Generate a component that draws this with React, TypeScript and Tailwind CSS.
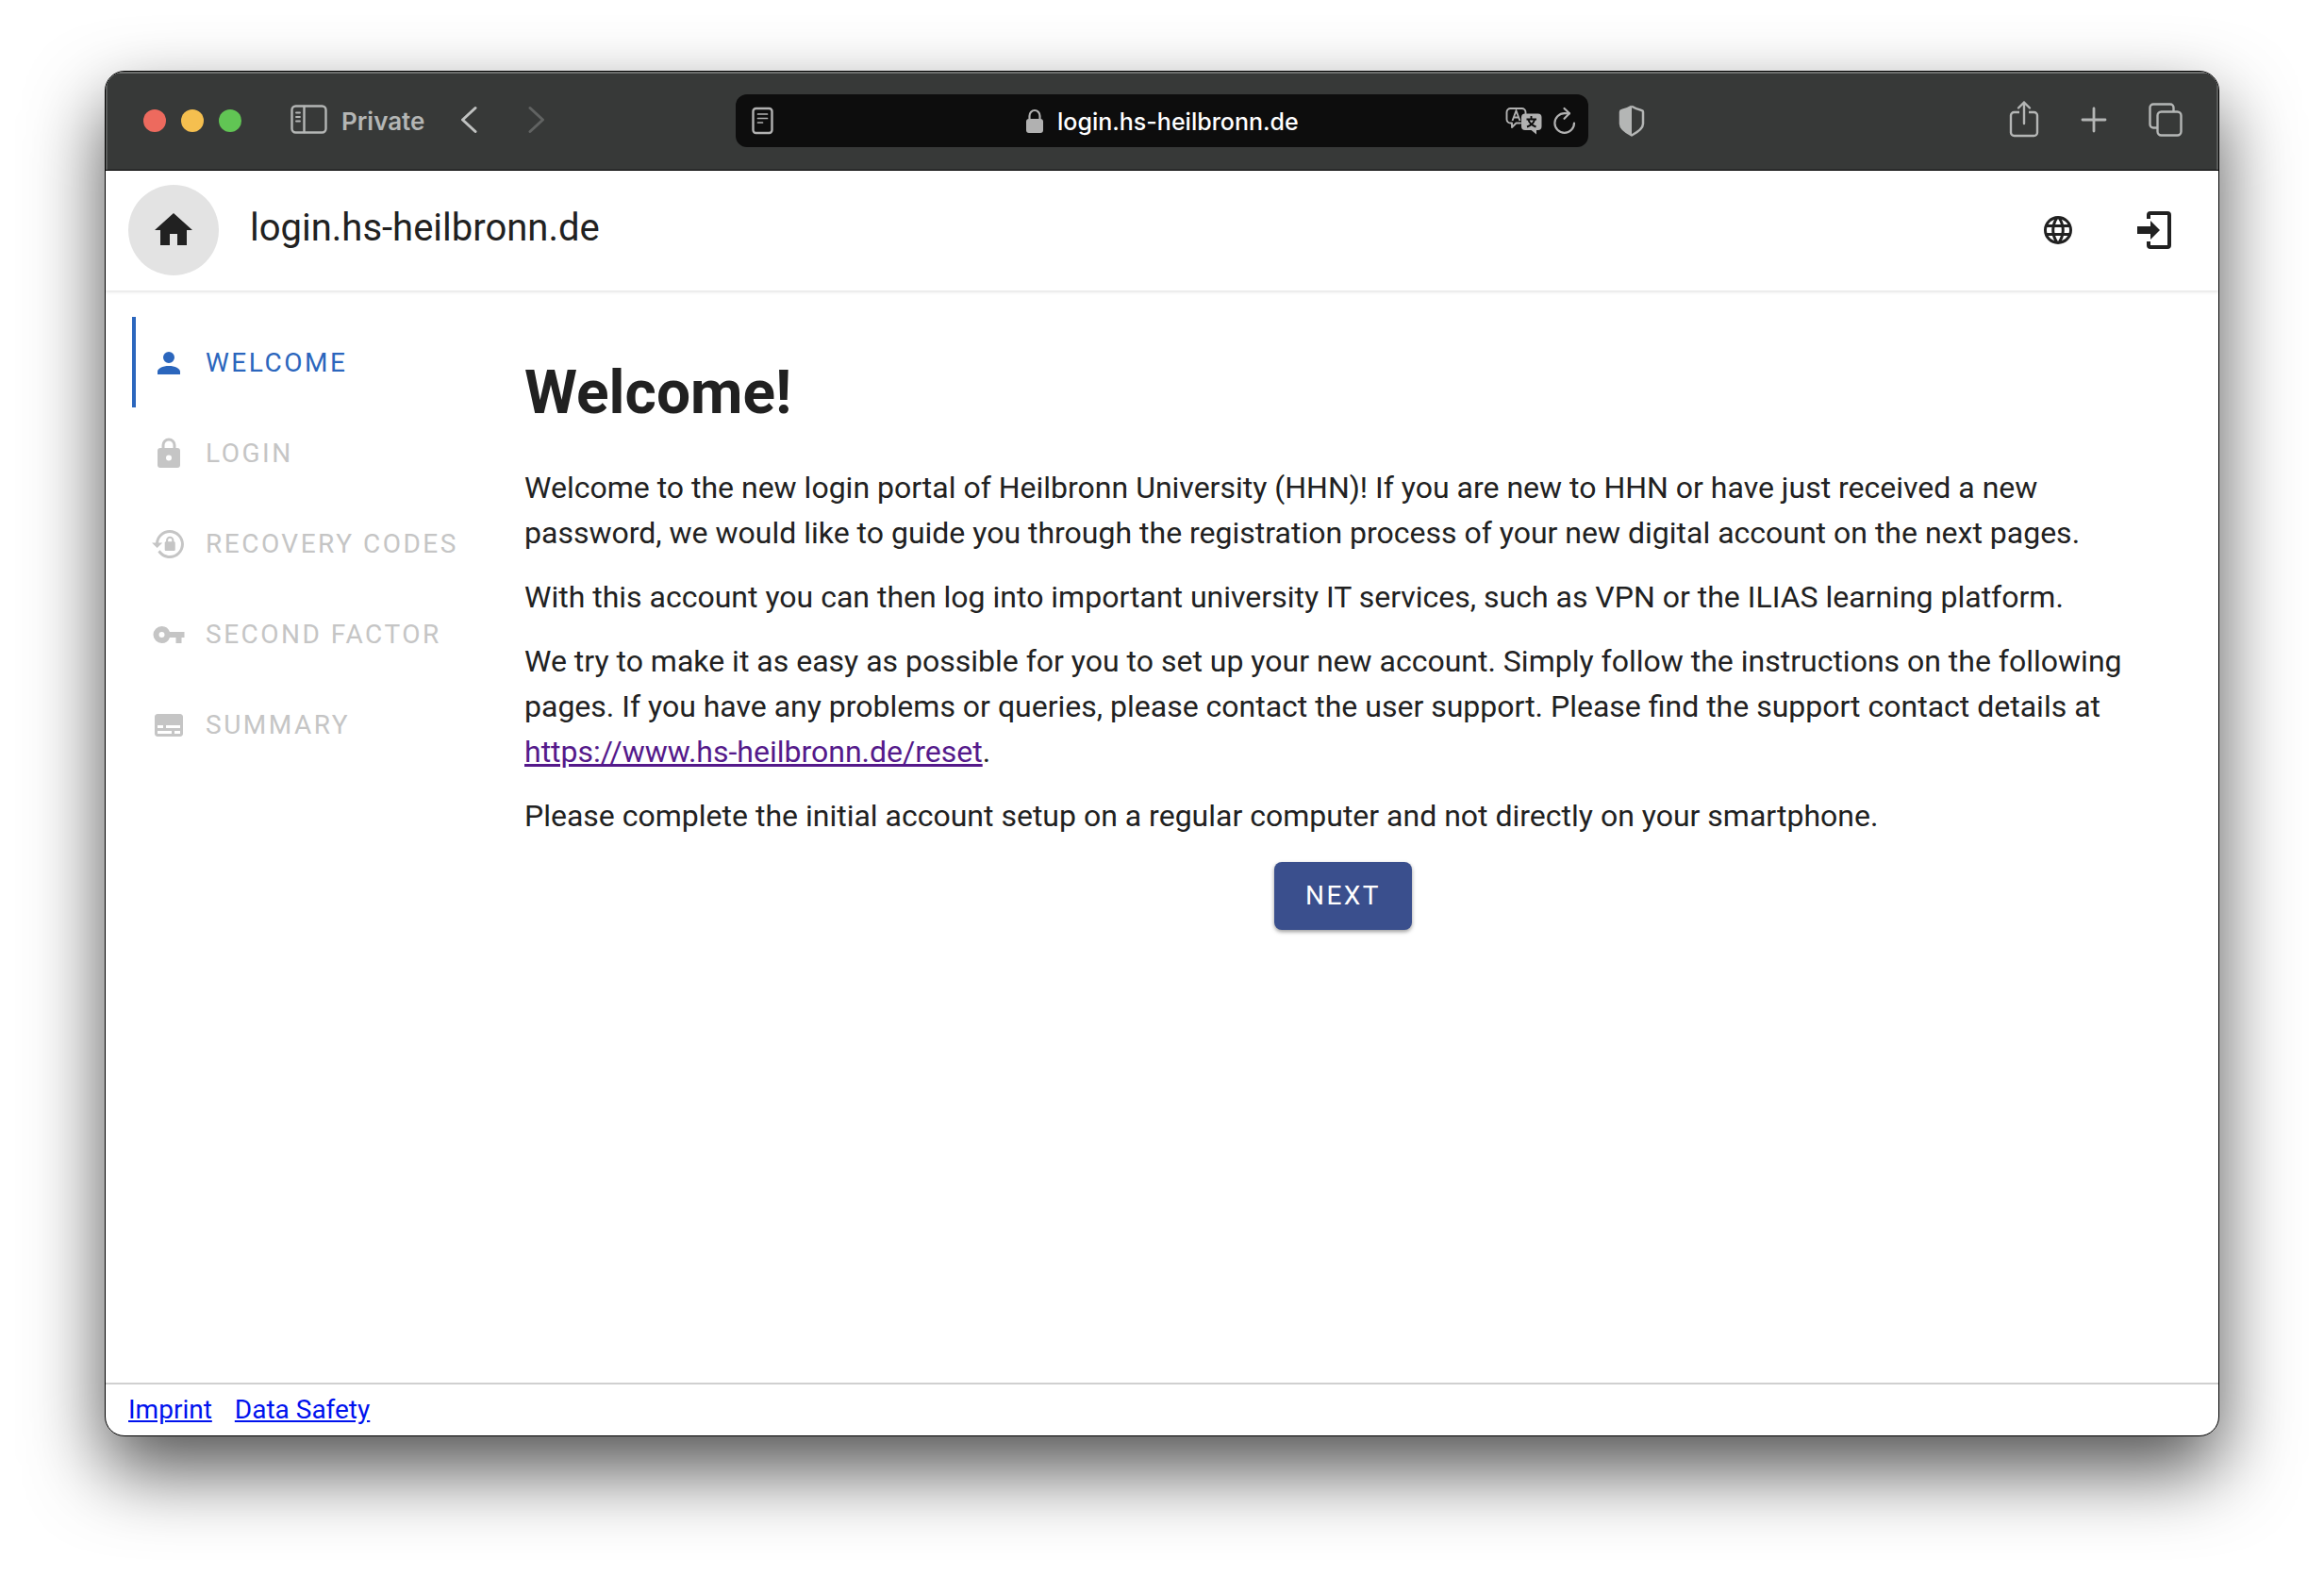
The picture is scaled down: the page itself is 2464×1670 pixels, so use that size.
import React from "react";

const navItems = [
  { label: "Welcome", path: "M12 4a4 4 0 0 1 4 4a4 4 0 0 1-4 4a4 4 0 0 1-4-4a4 4 0 0 1 4-4m0 10c4.420 0 8 1.790 8 4v2H4v-2c0-2.210 3.580-4 8-4" },
  { label: "Login", path: "M12 17a2 2 0 0 0 2-2a2 2 0 0 0-2-2a2 2 0 0 0-2 2a2 2 0 0 0 2 2m6-9a2 2 0 0 1 2 2v10a2 2 0 0 1-2 2H6a2 2 0 0 1-2-2V10a2 2 0 0 1 2-2h1V6a5 5 0 0 1 5-5a5 5 0 0 1 5 5v2zm-6-5a3 3 0 0 0-3 3v2h6V6a3 3 0 0 0-3-3" },
  { label: "Recovery codes", path: "M12.630 2c5.530 0 10.010 4.500 10.010 10s-4.480 10-10.010 10c-3.510 0-6.580-1.820-8.370-4.570l1.580-1.250C7.250 18.470 9.760 20 12.640 20a8 8 0 0 0 8-8a8 8 0 0 0-8-8C8.560 4 5.200 7.060 4.710 11h2.760l-3.740 3.730L0 11h2.690c.5-5.050 4.760-9 9.940-9m2.960 8.240c.5.010.91.410.91.920v4.610c0 .5-.41.920-.92.920H10.050c-.51 0-.92-.42-.92-.92v-4.610c0-.510.41-.910.91-.920V9.230c0-1.530 1.250-2.770 2.770-2.770c1.530 0 2.780 1.240 2.780 2.770zM12.810 7.860c-.75 0-1.370.61-1.370 1.370v1.010h2.750V9.230c0-.760-.62-1.370-1.380-1.370" },
  { label: "Second factor", path: "M7 14a2 2 0 0 1-2-2a2 2 0 0 1 2-2a2 2 0 0 1 2 2a2 2 0 0 1-2 2m5.650-4A5.990 5.990 0 0 0 7 6a6 6 0 0 0-6 6a6 6 0 0 0 6 6a5.990 5.990 0 0 0 5.650-4H17v4h4v-4h2v-4z" },
  { label: "Summary", path: "M20 4H4c-1.100 0-2 .9-2 2v12c0 1.100.9 2 2 2h16c1.100 0 2-.9 2-2V6c0-1.100-.9-2-2-2M4 12h4v2H4zm10 6H4v-2h10zm6 0h-4v-2h4zm0-4H10v-2h10z" },
];

function Glyph({ d, className }: { d: string; className: string }) {
  return (
    <svg viewBox="0 0 24 24" fill="currentColor" fillRule="evenodd" aria-hidden="true" className={className}>
      <path d={d} />
    </svg>
  );
}

const line = {
  fill: "none",
  stroke: "currentColor",
  strokeWidth: 2.4,
  strokeLinecap: "round" as const,
  strokeLinejoin: "round" as const,
  "aria-hidden": true,
};

function BrowserBar() {
  return (
    <div className="grid h-[105px] shrink-0 grid-cols-[1fr_904px_1fr] items-center border-b border-black bg-[#373938] text-[#b4b6b5] shadow-[inset_0_2px_0_#6d6f6e,inset_2px_0_0_#5a5c5b,inset_-2px_0_0_#5a5c5b]">
      <div className="flex items-center pl-10">
        <div className="flex gap-4">
          <button aria-label="Close window" className="size-6 rounded-full bg-[#ed6a5e]" />
          <button aria-label="Minimize window" className="size-6 rounded-full bg-[#f5bf4f]" />
          <button aria-label="Zoom window" className="size-6 rounded-full bg-[#61c554]" />
        </div>
        <button className="ml-13 flex items-center gap-[14px] pt-[2px] text-[26px] leading-8 font-semibold font-[Inter,sans-serif]">
          <svg viewBox="0 0 40 32" className="-mt-1 h-8 w-10" {...line}>
            <rect x="1.500" y="1.500" width="36" height="28" rx="4" />
            <path d="M14.500 2v27" />
            <path d="M6 8.500h4M6 13h4M6 17.500h4" strokeWidth="1.800" />
          </svg>
          Private
        </button>
        <button aria-label="Back" className="ml-[38px] text-[#c0c2c1]">
          <svg viewBox="0 0 18 32" className="-mt-[2px] h-8 w-[18px]" {...line} strokeWidth="3">
            <path d="M16 3.500 2.500 16 16 28.500" />
          </svg>
        </button>
        <button aria-label="Forward" className="ml-[54px] text-[#616362]">
          <svg viewBox="0 0 18 32" className="-mt-[2px] h-8 w-[18px]" {...line} strokeWidth="3">
            <path d="M2 3.500 15.500 16 2 28.500" />
          </svg>
        </button>
      </div>

      <div className="flex h-14 items-center justify-between rounded-xl bg-[#0d0d0d] pr-[13px] pl-[17px] text-[#b1b1b1]">
        <button aria-label="Show reader" className="flex w-20">
          <svg viewBox="0 0 24 30" className="h-[30px] w-6" {...line}>
            <rect x="1.500" y="2" width="20" height="26" rx="3" />
            <path d="M6.500 8h10M6.500 12.500h10M6.500 17h5" strokeWidth="1.700" />
          </svg>
        </button>
        <label className="flex items-center gap-[14px] pt-[2px]">
          <svg viewBox="0 0 20 28" className="h-7 w-5" aria-hidden="true">
            <rect x="1" y="11" width="18" height="15" rx="3" fill="currentColor" />
            <path d="M4.500 12V8a5.500 6 0 0 1 11 0v4" fill="none" stroke="currentColor" strokeWidth="2.200" />
          </svg>
          <input
            aria-label="Address"
            readOnly
            value="login.hs-heilbronn.de"
            className="w-[260px] bg-transparent text-[25px] leading-8 font-medium text-white outline-none font-[Inter,sans-serif]"
          />
        </label>
        <div className="flex w-20 items-center justify-end gap-3">
          <button aria-label="Translate">
            <svg viewBox="0 0 39 30" className="h-[30px] w-[39px]" aria-hidden="true">
              <path d="M16 17.500h-4.500l-4.500 4.500v-4.500H5.500a4 4 0 0 1-4-4V6a4 4 0 0 1 4-4h12a4 4 0 0 1 4 4v1.500" fill="none" stroke="currentColor" strokeWidth="1.900" strokeLinecap="round" strokeLinejoin="round" />
              <path d="m7.500 15 4-10.500L15.500 15M8.800 11.500h5.400" fill="none" stroke="currentColor" strokeWidth="1.900" />
              <path d="M21 7.500h13.500a4 4 0 0 1 4 4V21a4 4 0 0 1-4 4H33v4.500L27.500 25H21a4 4 0 0 1-4-4v-9.500a4 4 0 0 1 4-4" fill="currentColor" />
              <path d="M27.500 10v3M22.500 13.500h10.500M24.500 14c1 3.500 4 6 8 7.500M31 14c-1 3.500-4 6-8 7.500" fill="none" stroke="#0d0d0d" strokeWidth="1.900" />
            </svg>
          </button>
          <button aria-label="Reload">
            <svg viewBox="0 0 24 30" className="h-[30px] w-6" {...line} strokeWidth="2.200">
              <path d="M22 17.500A10.300 10.300 0 1 1 11.700 7.200L17 7.300" />
              <path d="M11.500 2 17 7.300l-5.500 5.500" />
            </svg>
          </button>
        </div>
      </div>

      <div className="flex items-center justify-between pr-[38px] pl-8">
        <button aria-label="Privacy report">
          <svg viewBox="0 0 28 34" className="h-[34px] w-7" aria-hidden="true">
            <path d="M14 1.800c3 1.900 7 3.400 10.500 4.200 1 .2 1.500.8 1.500 1.800v12.500c0 5-5 8.500-12 12.200-7-3.700-12-7.200-12-12.200V7.800c0-1 .5-1.600 1.500-1.800C7 5.200 11 3.700 14 1.800" fill="none" stroke="currentColor" strokeWidth="2.500" strokeLinejoin="round" />
            <path d="M14 1.800v30.700C7 28.800 2 25.300 2 20.300V7.800C2 6.800 2.500 6.200 3.500 6 7 5.200 11 3.700 14 1.800" fill="currentColor" />
          </svg>
        </button>
        <div className="flex items-center">
          <button aria-label="Share">
            <svg viewBox="0 0 32 40" className="-mt-1 h-10 w-8" {...line}>
              <path d="M11 13H5.500A3.500 3.500 0 0 0 2 16.500v18A3.500 3.500 0 0 0 5.500 38h21a3.500 3.500 0 0 0 3.500-3.500v-18a3.500 3.500 0 0 0-3.500-3.500H21" strokeLinecap="butt" />
              <path d="M16 25V2.500M10 8.500l6-6 6 6" />
            </svg>
          </button>
          <button aria-label="New tab" className="ml-11">
            <svg viewBox="0 0 28 28" className="-mt-[2px] size-7" {...line} strokeWidth="2.800">
              <path d="M14 2v24M2 14h24" />
            </svg>
          </button>
          <button aria-label="Show tab overview" className="ml-11">
            <svg viewBox="0 0 36 36" className="-mt-[2px] size-9" {...line}>
              <rect x="9.500" y="9.500" width="25" height="25" rx="4" />
              <path d="M9.500 26.500H5A3.500 3.500 0 0 1 1.500 23V5A3.500 3.500 0 0 1 5 1.500h18A3.500 3.500 0 0 1 26.500 5v4.500" strokeLinecap="butt" />
            </svg>
          </button>
        </div>
      </div>
    </div>
  );
}

export default function App() {
  return (
    <div className="flex min-h-screen flex-col bg-white px-[111px] pt-[75px] pb-[147px] font-[Roboto,sans-serif] text-[#212121]">
      <div className="flex grow flex-col overflow-hidden rounded-[21px] border border-black bg-white shadow-[0_36px_80px_rgba(0,0,0,0.68)]">
        <BrowserBar />

        <header className="flex items-center justify-between pt-[15px] pr-[22px] pb-4 pl-6 shadow-[0_1px_4px_rgba(0,0,0,0.15)]">
          <div className="flex items-center gap-[33px]">
            <button aria-label="Home" className="flex size-24 items-center justify-center rounded-full bg-[#e3e3e3]">
              <Glyph className="size-12" d="M10 20v-6h4v6h5v-8h3L12 3L2 12h3v8z" />
            </button>
            <span className="-mt-1 text-[40px] leading-[64px]">login.hs-heilbronn.de</span>
          </div>
          <div className="flex items-center gap-1">
            <button aria-label="Change language" className="flex size-24 items-center justify-center">
              <Glyph className="size-9" d="M16.360 14c.08-.66.14-1.320.14-2s-.06-1.340-.14-2h3.380c.16.640.26 1.310.26 2s-.1 1.360-.26 2m-5.150 5.560c.6-1.110 1.060-2.310 1.380-3.560h2.950a8.030 8.030 0 0 1-4.330 3.560M14.340 14H9.660c-.1-.66-.16-1.320-.16-2s.06-1.350.16-2h4.680c.09.650.16 1.320.16 2s-.07 1.340-.16 2M12 19.960c-.83-1.200-1.500-2.530-1.910-3.960h3.820c-.41 1.430-1.080 2.760-1.910 3.960M8 8H5.080A7.920 7.920 0 0 1 9.400 4.440C8.800 5.550 8.350 6.750 8 8m-2.920 8H8c.35 1.250.8 2.450 1.400 3.560A8 8 0 0 1 5.080 16m-.82-2C4.100 13.360 4 12.690 4 12s.1-1.360.26-2h3.380c-.08.660-.14 1.320-.14 2s.06 1.340.14 2M12 4.030c.83 1.200 1.500 2.540 1.910 3.970h-3.820c.41-1.430 1.080-2.770 1.910-3.970M18.920 8h-2.950a15.700 15.700 0 0 0-1.380-3.560c1.840.63 3.370 1.900 4.330 3.560M12 2C6.470 2 2 6.500 2 12a10 10 0 0 0 10 10a10 10 0 0 0 10-10A10 10 0 0 0 12 2" />
            </button>
            <button aria-label="Log in" className="flex size-24 items-center justify-center">
              <Glyph className="size-12" d="M9 6V4a2 2 0 0 1 2-2h9a2 2 0 0 1 2 2v16a2 2 0 0 1-2 2h-9a2 2 0 0 1-2-2v-2h2v2h9V4h-9v2zM4 10h7V7l5 5-5 5v-3H4z" />
            </button>
          </div>
        </header>

        <div className="flex grow">
          <nav className="w-[388px] shrink-0 pt-7 pl-7">
            {navItems.map((item, i) => (
              <button
                key={item.label}
                disabled={i > 0}
                className={
                  i === 0
                    ? "flex h-24 w-full items-center gap-[21px] border-l-4 border-[#2b66bd] pt-px pl-[17px] text-[28px] tracking-[2.5px] text-[#2b66bd] uppercase"
                    : "flex h-24 w-full items-center gap-[21px] border-l-4 border-transparent pt-px pl-[17px] text-[28px] tracking-[2.5px] text-[#c5c5c5] uppercase"
                }
              >
                <Glyph className="size-9" d={item.path} />
                {item.label}
              </button>
            ))}
          </nav>

          <main className="grow pt-[65px] pr-[60px] pl-14 text-[32px] leading-12">
            <h1 className="text-[64px] leading-[88px] font-bold">Welcome!</h1>
            <div className="mt-8 flex flex-col gap-5">
              <p>
                Welcome to the new login portal of Heilbronn University (HHN)! If you are new to HHN or have just
                received a new password, we would like to guide you through the registration process of your new
                digital account on the next pages.
              </p>
              <p>
                With this account you can then log into important university IT services, such as VPN or the ILIAS
                learning platform.
              </p>
              <p>
                We try to make it as easy as possible for you to set up your new account. Simply follow the
                instructions on the following pages. If you have any problems or queries, please contact the user
                support. Please find the support contact details at{" "}
                <a href="https://www.hs-heilbronn.de/reset" className="text-[#551a8b] underline">
                  https://www.hs-heilbronn.de/reset
                </a>
                .
              </p>
              <p>Please complete the initial account setup on a regular computer and not directly on your smartphone.</p>
            </div>
            <div className="mt-[25px] flex justify-center">
              <button className="h-[72px] rounded-lg bg-[#3a4f8d] px-[33px] text-[28px] tracking-[2.5px] text-white uppercase shadow-[0_2px_4px_rgba(0,0,0,0.4)]">
                Next
              </button>
            </div>
          </main>
        </div>

        <footer className="flex gap-6 border-t-2 border-[#d0d0d0] px-6 py-[7px] text-[28px] leading-10 text-[#0012ee]">
          <a href="#imprint" className="underline">Imprint</a>
          <a href="#data-safety" className="underline">Data Safety</a>
        </footer>
      </div>
    </div>
  );
}
